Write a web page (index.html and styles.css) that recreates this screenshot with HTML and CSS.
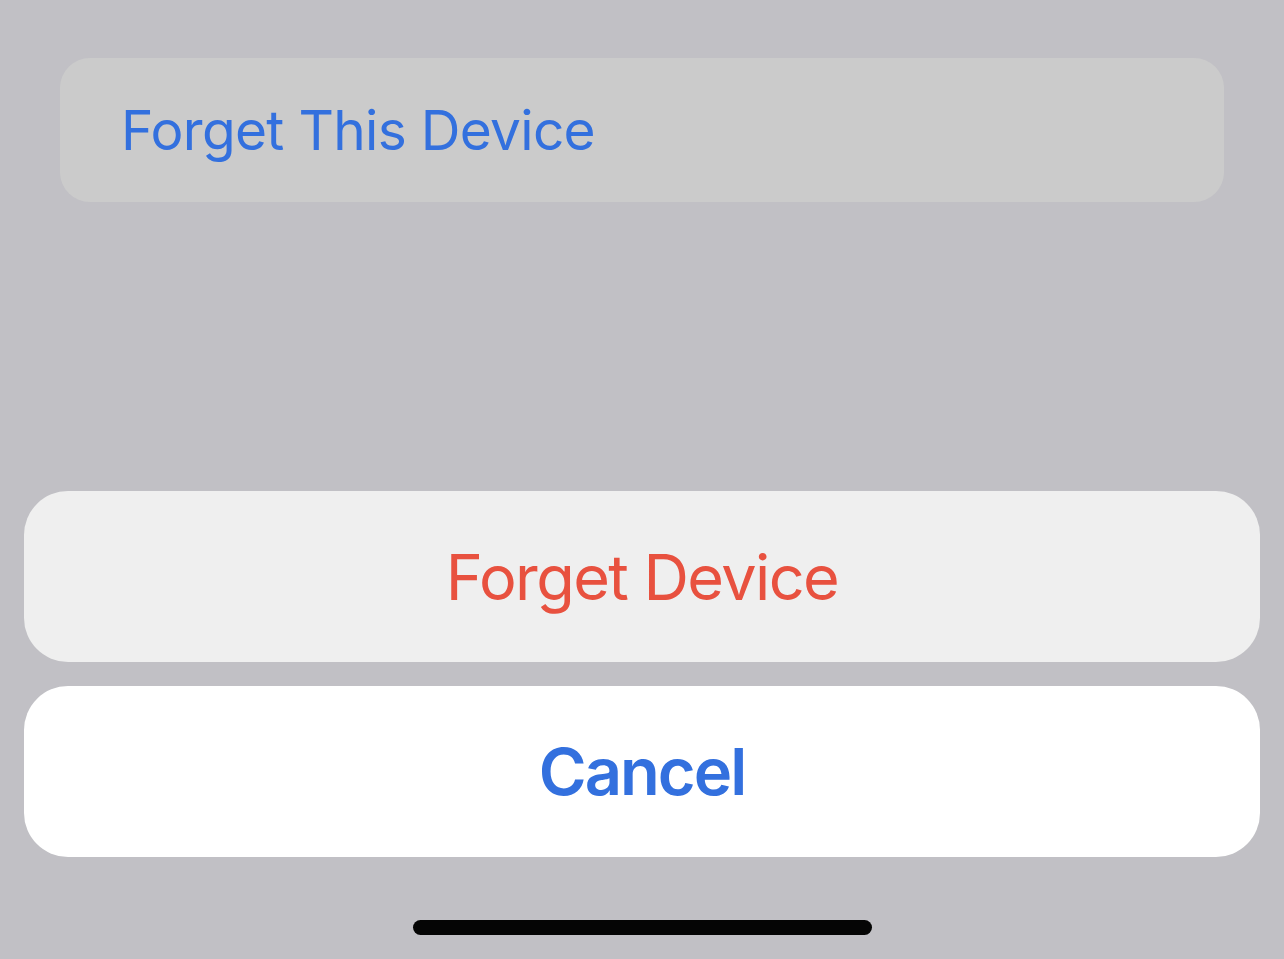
FILE: index.html
```html
<!DOCTYPE html>
<html lang="en">
<head>
<meta charset="utf-8">
<title>Forget Device</title>
<link rel="stylesheet" href="styles.css">
</head>
<body>
<div class="screen">
  <div class="row-card">
    <span class="row-label">Forget This Device</span>
  </div>
  <div class="sheet">
    <div class="sheet-btn sheet-btn--destructive">Forget Device</div>
    <div class="sheet-btn sheet-btn--cancel">Cancel</div>
  </div>
  <div class="home-indicator"></div>
</div>
</body>
</html>
```
FILE: styles.css
```css
html, body {
  margin: 0;
  padding: 0;
}
body {
  background: #c1c0c5;
  font-family: Inter, "Noto Sans", "Liberation Sans", sans-serif;
}
.screen {
  width: 1284px;
  height: 959px;
  display: flex;
  flex-direction: column;
  overflow: hidden;
}
.row-card {
  margin: 58px 60px 0;
  height: 144px;
  background: #cbcbcb;
  border-radius: 30px;
  display: flex;
  align-items: center;
  padding-left: 61px;
}
.row-label {
  color: #3370de;
  font-size: 55px;
  font-weight: 400;
  letter-spacing: -0.7px;
}
.sheet {
  margin: 289px 24px 0;
  display: flex;
  flex-direction: column;
  gap: 24px;
}
.sheet-btn {
  height: 171px;
  border-radius: 44px;
  display: flex;
  align-items: center;
  justify-content: center;
}
.sheet-btn--destructive {
  background: #efefef;
  color: #e8513f;
  font-size: 63px;
  font-weight: 400;
  letter-spacing: -1.6px;
}
.sheet-btn--cancel {
  background: #ffffff;
  color: #3370de;
  font-size: 65px;
  font-weight: 600;
  letter-spacing: -2px;
}
.home-indicator {
  align-self: center;
  margin-top: 63px;
  width: 459px;
  height: 15px;
  border-radius: 8px;
  background: #050505;
}
```
